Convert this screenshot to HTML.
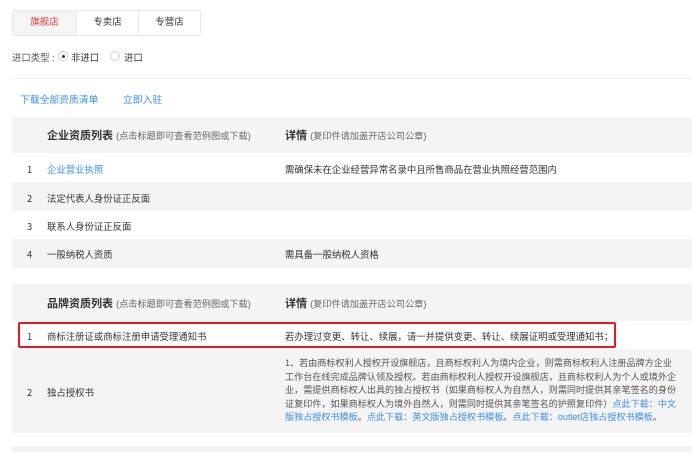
<!DOCTYPE html>
<html><head><meta charset="utf-8"><style>
*{margin:0;padding:0;box-sizing:border-box}
body{width:692px;height:452px;overflow:hidden;background:#fff;font-family:"Liberation Sans","Noto Sans CJK SC",sans-serif;font-size:9.4px;color:#333;position:relative}
.a{position:absolute;white-space:nowrap}
.n{font-family:"Noto Sans CJK SC",sans-serif}
.tabs{position:absolute;left:12px;top:10px;width:189px;height:26px;border:1px solid #e8e8e8;border-radius:3px;display:flex;overflow:hidden}
.tabs div{flex:1;text-align:center;line-height:24px;font-size:9.5px;border-left:1px solid #e8e8e8}
.tabs div:first-child{border-left:none;background:#f5f5f5;color:#e4393c;flex:0 0 63px}
.g{background:#f4f4f4}
.blk{position:absolute;left:12px;width:680px}
.h{font-size:11px;font-weight:bold;color:#333}
.h span{font-weight:normal;font-size:9.2px;color:#666}
.blue{color:#3b8ef0}
</style></head><body>
<div class="tabs"><div>旗舰店</div><div>专卖店</div><div>专营店</div></div>
<div class="a" style="left:12px;top:50px;color:#555">进口类型 :</div>
<div class="a" style="left:58px;top:51px;width:10px;height:10px;border:1px solid #ccc;border-radius:50%"><div style="position:absolute;left:2.5px;top:2.5px;width:3px;height:3px;background:#333;border-radius:50%"></div></div>
<div class="a" style="left:71px;top:50px">非进口</div>
<div class="a" style="left:110px;top:51px;width:10px;height:10px;border:1px solid #ccc;border-radius:50%"></div>
<div class="a" style="left:124px;top:50px">进口</div>
<div class="a" style="left:12px;top:78px;width:680px;height:1px;background:#eee"></div>
<div class="a blue" style="left:20px;top:92px;font-size:9.8px">下载全部资质清单</div>
<div class="a blue" style="left:123px;top:92px;font-size:9.8px">立即入驻</div>

<div class="blk g" style="top:117px;height:36px"></div>
<div class="a h" style="left:47px;top:127px">企业资质列表 <span>(点击标题即可查看范例图或下载)</span></div>
<div class="a h" style="left:285px;top:127px">详情 <span>(复印件请加盖开店公司公章)</span></div>
<div class="a n" style="left:27px;top:162px">1</div><div class="a blue" style="left:47px;top:162px">企业营业执照</div><div class="a" style="left:285px;top:162px">需确保未在企业经营异常名录中且所售商品在营业执照经营范围内</div>
<div class="blk g" style="top:182px;height:29px"></div>
<div class="a n" style="left:27px;top:191px">2</div><div class="a" style="left:47px;top:191px">法定代表人身份证正反面</div>
<div class="a n" style="left:27px;top:219px">3</div><div class="a" style="left:47px;top:219px">联系人身份证正反面</div>
<div class="blk g" style="top:239px;height:29px"></div>
<div class="a n" style="left:27px;top:247px">4</div><div class="a" style="left:47px;top:247px">一般纳税人资质</div><div class="a" style="left:285px;top:247px">需具备一般纳税人资格</div>

<div class="blk g" style="top:284px;height:37px"></div>
<div class="a h" style="left:47px;top:295px">品牌资质列表 <span>(点击标题即可查看范例图或下载)</span></div>
<div class="a h" style="left:285px;top:295px">详情 <span>(复印件请加盖开店公司公章)</span></div>
<div class="a" style="left:18px;top:322px;width:598px;height:26px;border:2px solid #f0141e;border-radius:2px"></div>
<div class="a n" style="left:27px;top:329px">1</div><div class="a" style="left:47px;top:329px">商标注册证或商标注册申请受理通知书</div><div class="a" style="left:285px;top:329px">若办理过变更、转让、续展，请一并提供变更、转让、续展证明或受理通知书；</div>
<div class="blk g" style="top:349px;height:84px"></div>
<div class="a n" style="left:27px;top:385px">2</div><div class="a" style="left:47px;top:385px">独占授权书</div>
<div class="a" style="left:285px;top:357px;line-height:13.6px;color:#555;font-size:9.1px">1、若由商标权利人授权开设旗舰店，且商标权利人为境内企业，则需商标权利人注册品牌方企业<br>工作台在线完成品牌认领及授权。若由商标权利人授权开设旗舰店，且商标权利人为个人或境外企<br>业，需提供商标权人出具的独占授权书（如果商标权人为自然人，则需同时提供其亲笔签名的身份<br>证复印件，如果商标权人为境外自然人，则需同时提供其亲笔签名的护照复印件）<span class="blue">点此下载：中文</span><br><span class="blue">版独占授权书模板</span>。<span class="blue">点此下载：英文版独占授权书模板</span>。<span class="blue">点此下载：outlet店独占授权书模板</span>。</div>
<div class="blk g" style="top:446px;height:6px"></div>
</body></html>
